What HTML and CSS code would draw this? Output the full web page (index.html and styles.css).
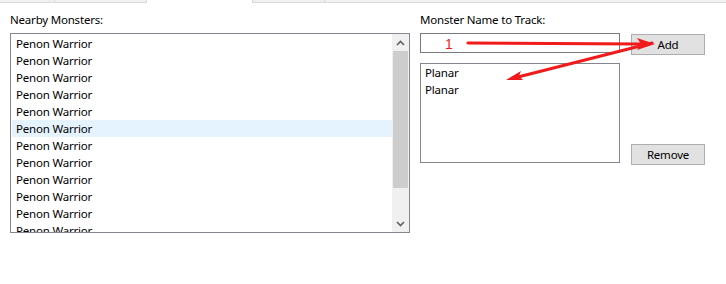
FILE: index.html
```html
<!DOCTYPE html>
<html lang="en">
<head>
    <meta charset="UTF-8">
    <title>Monster Tracker</title>
    <link rel="stylesheet" href="styles.css">
</head>
<body>
    <div class="tabs">
        <div class="tab tab-a"></div>
        <div class="tab tab-b"></div>
        <div class="tab-active"></div>
        <div class="tab tab-c"></div>
        <div class="tab tab-d"></div>
    </div>

    <div class="panel">
        <div class="left">
            <div class="label">Nearby Monsters:</div>
            <div class="listbox nearby">
                <div class="items">
                    <div class="item">Penon Warrior</div>
                    <div class="item">Penon Warrior</div>
                    <div class="item">Penon Warrior</div>
                    <div class="item">Penon Warrior</div>
                    <div class="item">Penon Warrior</div>
                    <div class="item hover">Penon Warrior</div>
                    <div class="item">Penon Warrior</div>
                    <div class="item">Penon Warrior</div>
                    <div class="item">Penon Warrior</div>
                    <div class="item">Penon Warrior</div>
                    <div class="item">Penon Warrior</div>
                    <div class="item">Penon Warrior</div>
                </div>
                <div class="scrollbar">
                    <div class="sb-btn">
                        <svg width="9" height="6" viewBox="0 0 9 6"><polyline points="1,5 4.5,1.5 8,5" fill="none" stroke="#606060" stroke-width="1.6"/></svg>
                    </div>
                    <div class="sb-track">
                        <div class="sb-thumb"></div>
                    </div>
                    <div class="sb-btn">
                        <svg width="9" height="6" viewBox="0 0 9 6"><polyline points="1,1 4.5,4.5 8,1" fill="none" stroke="#606060" stroke-width="1.6"/></svg>
                    </div>
                </div>
            </div>
        </div>

        <div class="right">
            <div class="label">Monster Name to Track:</div>
            <div class="row">
                <div class="textbox"></div>
                <button class="btn add">Add</button>
            </div>
            <div class="row bottom">
                <div class="listbox tracked">
                    <div class="item">Planar</div>
                    <div class="item">Planar</div>
                </div>
                <button class="btn remove">Remove</button>
            </div>
        </div>
    </div>

    <!-- red annotation drawn over the form -->
    <svg class="marks" width="726" height="284" viewBox="0 0 726 284">
        <text x="445" y="49" class="mark-num">1</text>
        <path d="M468 43 L640 44" stroke="#f21b1b" stroke-width="3" fill="none" stroke-linecap="round"/>
        <polygon points="655,44 637,38 641,44 637,50" fill="#f21b1b"/>
        <path d="M652 43 L518 77" stroke="#f21b1b" stroke-width="3" fill="none" stroke-linecap="round"/>
        <polygon points="506,80 521,71 519,76 523,80" fill="#f21b1b"/>
    </svg>
</body>
</html>
```

FILE: styles.css
```css
body {
    margin: 0;
    background: #fff;
    font-family: "Segoe UI", "Noto Sans", sans-serif;
    font-size: 11.5px;
    letter-spacing: -0.2px;
    color: #000;
    position: relative;
    width: 726px;
    height: 284px;
    overflow: hidden;
}

.tabs {
    display: flex;
    height: 3px;
}

.tab {
    background: #f0f0f0;
    border-bottom: 1px solid #d9d9d9;
    border-right: 1px solid #d9d9d9;
    box-sizing: border-box;
}

.tab-a { width: 55px; }
.tab-b { width: 92px; }
.tab-active { width: 105px; }
.tab-c { width: 73px; border-left: 1px solid #d9d9d9; }
.tab-d { flex: 1; border-right: none; }

.panel {
    display: flex;
    gap: 10px;
    padding: 9px 0 0 10px;
}

.label {
    height: 15px;
    line-height: 15px;
    margin-bottom: 6px;
}

.left {
    width: 400px;
}

.listbox {
    border: 1px solid #828790;
    background: #fff;
    box-sizing: border-box;
    overflow: hidden;
}

.nearby {
    height: 200px;
    display: flex;
}

.items {
    flex: 1;
    padding: 1px 0 0 1px;
}

.item {
    height: 17px;
    line-height: 17px;
    padding-left: 4px;
    white-space: nowrap;
}

.item.hover {
    background: #e5f3ff;
}

.scrollbar {
    width: 17px;
    background: #f0f0f0;
    display: flex;
    flex-direction: column;
}

.sb-btn {
    height: 17px;
    display: flex;
    align-items: center;
    justify-content: center;
}

.sb-track {
    flex: 1;
    padding: 0 1px;
}

.sb-thumb {
    height: 137px;
    background: #cdcdcd;
}

.right {
    display: flex;
    flex-direction: column;
}

.row {
    display: flex;
    gap: 11px;
    align-items: flex-start;
}

.textbox {
    width: 200px;
    height: 20px;
    border: 1px solid #7a7a7a;
    box-sizing: border-box;
}

.btn {
    width: 74px;
    height: 21px;
    background: #e1e1e1;
    border: 1px solid #adadad;
    font-family: inherit;
    font-size: 11.5px;
    letter-spacing: -0.2px;
    color: #000;
    padding: 0;
    box-sizing: border-box;
}

.add {
    margin-top: 1px;
}

.bottom {
    margin-top: 8px;
    align-items: flex-end;
}

.tracked {
    width: 200px;
    height: 100px;
}

.remove {
    margin-bottom: -2px;
}

.marks {
    position: absolute;
    left: 0;
    top: 0;
    pointer-events: none;
}

.mark-num {
    font-family: "Liberation Sans", sans-serif;
    font-size: 14px;
    letter-spacing: 0;
    fill: #f21b1b;
}
```
